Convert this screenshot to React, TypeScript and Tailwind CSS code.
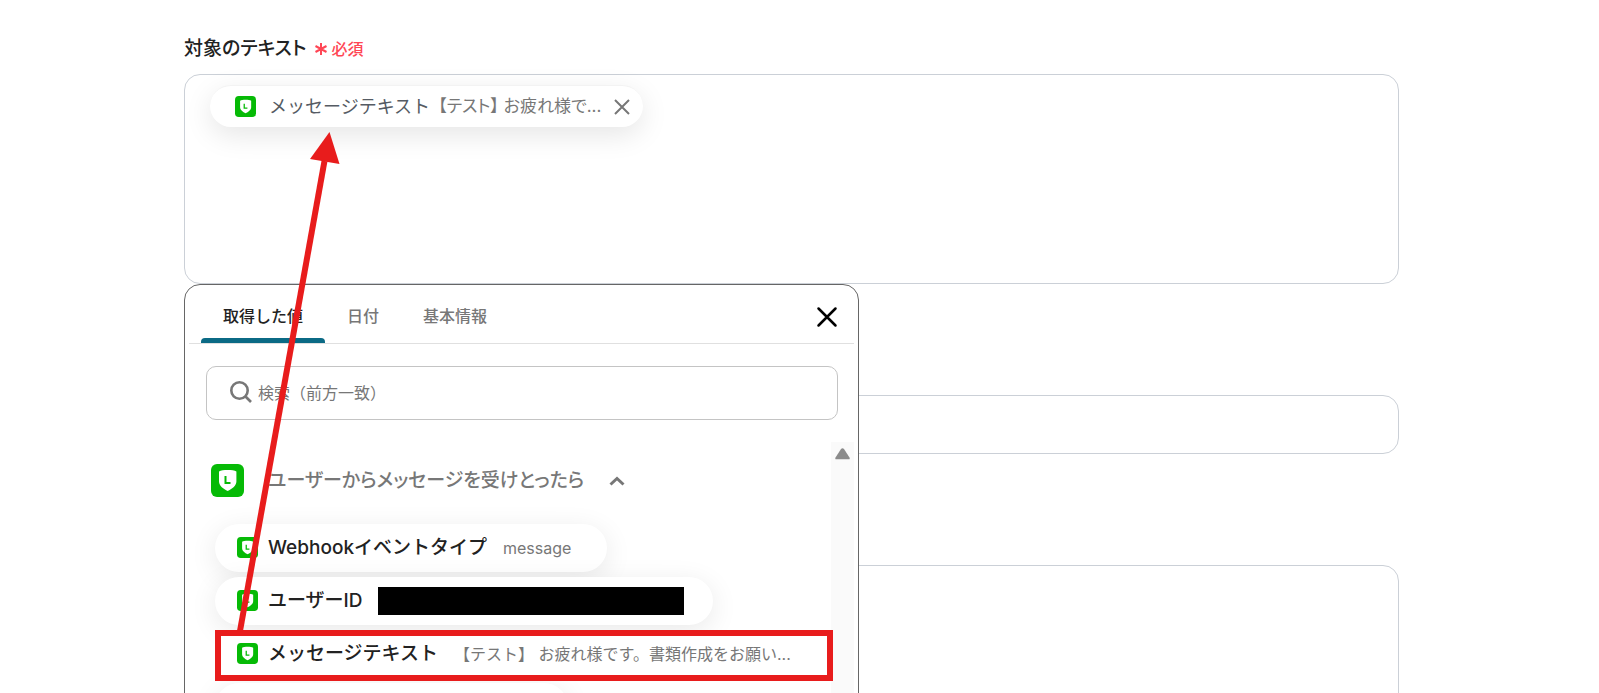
import { useState } from "react";

const tabs = ["取得した値", "日付", "基本情報"];

function LineIcon({ className }: { className: string }) {
  return (
    <svg viewBox="0 0 33 33" className={className} aria-hidden="true">
      <rect width="33" height="33" rx="6" fill="#06ba06" />
      <path d="M8 7.500c3.200-1.900 14.200-1.900 17.400 0v10c0 4.500-4.700 7.500-8.700 9.500-4-2-8.700-5-8.700-9.500z" fill="#fff" />
      <path d="M14.500 12v7h5" fill="none" stroke="#06ba06" strokeWidth="2" />
    </svg>
  );
}

function Arrow() {
  return (
    <svg width="120" height="520" viewBox="0 0 120 520" className="pointer-events-none absolute left-[230px] top-[120px] z-20" aria-hidden="true">
      <path d="M10 511 94.500 41" stroke="#e81c1c" strokeWidth="6" />
      <path d="M99.500 12 80 39l29.500 5z" fill="#e81c1c" />
    </svg>
  );
}

type ItemProps = {
  name: string;
  value?: string;
  masked?: boolean;
  highlighted?: boolean;
};

function Item({ name, value, masked, highlighted }: ItemProps) {
  return (
    <li className={highlighted ? "relative z-10 w-[618px] bg-white" : "relative"}>
      <button
        type="button"
        className={`flex h-12 items-center rounded-full bg-white pl-[22px] ${masked ? "pr-[29px]" : "pr-9"} ${highlighted ? "w-full" : "shadow-[0_6px_28px_rgba(0,0,0,0.09)]"}`}
      >
        <LineIcon className="mr-[10px] mb-[2px] size-[21px]" />
        <span className="text-[19px] font-medium text-[#222]">{name}</span>
        {value && <span className="ml-4 text-base text-[#777]">{value}</span>}
        {masked && <span className="ml-[15px] h-7 w-[306px] bg-black" />}
      </button>
      {highlighted && <span className="absolute inset-x-0 top-0 h-[51px] border-6 border-[#e81c1c]" />}
    </li>
  );
}

export default function App() {
  const [active, setActive] = useState(0);

  return (
    <main className="relative h-screen overflow-hidden bg-white pl-[184px] pr-[200px] pt-[34px] font-['Inter','Noto_Sans_CJK_JP',sans-serif]">
      <h2 className="flex h-7 items-center pt-[2px] text-[19px] font-medium text-[#222] [font-feature-settings:'palt']">
        対象のテキスト
        <span className="ml-[7px] flex items-center gap-1 text-base text-[#ff4655]">
          <svg width="14" height="14" viewBox="0 0 14 14" fill="none" stroke="currentColor" strokeWidth="2" aria-hidden="true">
            <path d="M7 1v12M1.500 4l11 6M12.500 4l-11 6" />
          </svg>
          必須
        </span>
      </h2>

      <div className="relative mt-3">
        <section className="h-[210px] rounded-2xl border border-[#cbd0d7] px-[25px] py-[10px]">
          <div className="flex h-[42px] w-fit items-center rounded-full border-t border-[#f3f3f3] bg-white pl-[25px] pr-3 shadow-[0_8px_28px_rgba(0,0,0,0.1)]">
            <LineIcon className="mr-[13px] size-[21px]" />
            <span className="text-lg text-[#555b63]">メッセージテキスト</span>
            <span className="ml-2 text-[17px] text-[#777] [font-feature-settings:'palt']">【テスト】 お疲れ様で...</span>
            <button type="button" aria-label="削除" className="ml-3 text-[#777]">
              <svg width="18" height="18" viewBox="0 0 18 18" fill="none" stroke="currentColor" strokeWidth="2" aria-hidden="true">
                <path d="m2 2 14 14M16 2 2 16" />
              </svg>
            </button>
          </div>
        </section>

        <section className="absolute left-0 top-[210px] z-10 h-[600px] w-[675px] rounded-2xl border border-[#666] bg-white px-1">
          <div className="flex h-[59px] items-center border-b border-[#e0e0e0] pl-3 pr-4">
            <div role="tablist" className="flex h-full flex-1">
              {tabs.map((tab, i) => (
                <button
                  key={tab}
                  type="button"
                  role="tab"
                  aria-selected={i === active}
                  onClick={() => setActive(i)}
                  className={`relative px-[22px] pt-[3px] text-base font-medium ${i === active ? "text-[#222]" : "text-[#777]"}`}
                >
                  {tab}
                  {i === active && <span className="absolute inset-x-0 bottom-0 h-[5px] rounded-t bg-[#0b6a85]" />}
                </button>
              ))}
            </div>
            <button type="button" aria-label="閉じる" className="pt-[6px]">
              <svg width="22" height="22" viewBox="0 0 22 22" fill="none" stroke="#000" strokeWidth="2.500" strokeLinecap="round" aria-hidden="true">
                <path d="m2.500 2.500 17 17M19.500 2.500l-17 17" />
              </svg>
            </button>
          </div>

          <label className="ml-[17px] mr-4 mt-[22px] flex h-[54px] items-center gap-[5px] rounded-[10px] border border-[#c4c4c4] pl-[22px]">
            <svg width="24" height="24" viewBox="0 0 24 24" fill="none" stroke="#777" strokeWidth="2.600" aria-hidden="true">
              <circle cx="10.500" cy="9.500" r="8.200" />
              <path d="m16.500 15.500 5.500 5.500" />
            </svg>
            <input type="search" aria-label="検索" placeholder="検索（前方一致）" className="min-w-0 flex-1 text-base outline-none placeholder:text-[#777]" />
          </label>

          <div className="mt-[22px] flex h-[440px]">
            <div className="min-w-0 flex-1 pl-[22px] pt-[22px]">
              <button type="button" aria-expanded="true" className="flex h-[33px] items-center">
                <LineIcon className="mr-6 size-[33px]" />
                <span className="pt-[2px] text-[19px] font-medium text-[#777] [font-feature-settings:'palt']">ユーザーからメッセージを受けとったら</span>
                <svg width="16" height="10" viewBox="0 0 16 10" fill="none" stroke="#777" strokeWidth="3" className="ml-[25px]" aria-hidden="true">
                  <path d="m1.500 8.500 6.500-6 6.500 6" />
                </svg>
              </button>
              <ul className="ml-1 mt-[27px] flex flex-col items-start gap-[5px]">
                <Item name="Webhookイベントタイプ" value="message" />
                <Item name="ユーザーID" masked />
                <Item name="メッセージテキスト" value="【テスト】 お疲れ様です。書類作成をお願い..." highlighted />
                <li className="h-12 w-[353px] rounded-full bg-white shadow-[0_6px_28px_rgba(0,0,0,0.09)]" />
              </ul>
            </div>
            <div className="flex w-[23px] justify-center bg-[#fafafa] pt-[6px]">
              <svg width="15" height="12" viewBox="0 0 15 12" aria-hidden="true">
                <path d="M6 1q1.500-1.500 3 0l5.500 8.500q.8 1.800-1 1.800H1.500q-1.800 0-1-1.800z" fill="#8b8b8b" />
              </svg>
            </div>
          </div>
        </section>
      </div>

      <div className="mt-[111px] h-[59px] rounded-2xl border border-[#cbd0d7]" />
      <div className="mt-[111px] h-[210px] rounded-2xl border border-[#cbd0d7]" />
      <Arrow />
    </main>
  );
}
